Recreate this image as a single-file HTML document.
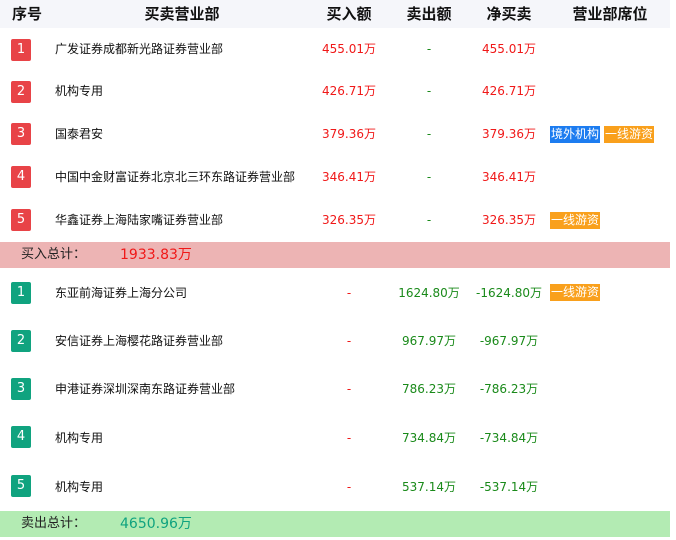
<!DOCTYPE html>
<html><head><meta charset="utf-8"><style>
body{margin:0;width:676px;height:540px;background:#fff;font-family:"DejaVu Sans","Noto Sans CJK SC",sans-serif;position:relative;overflow:hidden}
div{white-space:nowrap}
.a{position:absolute}
.hd{position:absolute;left:0;top:0;width:670px;height:28px;background:#f5f6fa}
.h{position:absolute;top:0;line-height:28px;font-size:15px;font-weight:bold;color:#111;transform:translateX(-50%)}
.b{position:absolute;left:11px;width:20px;height:22px;border-radius:2px;color:#fff;font-size:13px;line-height:22px;text-align:center}
.r{background:#e84347}.g{background:#10a37f}
.n{position:absolute;left:55px;font-size:12px;color:#111;line-height:16px}
.c{position:absolute;font-size:12px;line-height:16px;transform:translateX(-50%)}
.red{color:#f01818}.grn{color:#1a8a1a}
.t{position:absolute;height:17px;line-height:17px;font-size:12px;color:#fff;padding:0 1px}
.tb{background:#1c7cf0}.to{background:#f9a01c}
.bar{position:absolute;left:0;width:670px;height:26px}
</style></head><body>
<div class="hd"></div>
<div class="h" style="left:27px">序号</div>
<div class="h" style="left:182px">买卖营业部</div>
<div class="h" style="left:349px">买入额</div>
<div class="h" style="left:429px">卖出额</div>
<div class="h" style="left:509px">净买卖</div>
<div class="h" style="left:610px">营业部席位</div>

<div class="b r" style="top:39px">1</div><div class="n" style="top:41px">广发证券成都新光路证券营业部</div>
<div class="c red" style="left:349px;top:41px">455.01万</div><div class="c grn" style="left:429px;top:41px">-</div><div class="c red" style="left:509px;top:41px">455.01万</div>

<div class="b r" style="top:81px">2</div><div class="n" style="top:83px">机构专用</div>
<div class="c red" style="left:349px;top:83px">426.71万</div><div class="c grn" style="left:429px;top:83px">-</div><div class="c red" style="left:509px;top:83px">426.71万</div>

<div class="b r" style="top:123px">3</div><div class="n" style="top:126px">国泰君安</div>
<div class="c red" style="left:349px;top:126px">379.36万</div><div class="c grn" style="left:429px;top:126px">-</div><div class="c red" style="left:509px;top:126px">379.36万</div>
<div class="t tb" style="left:550px;top:126px">境外机构</div><div class="t to" style="left:604px;top:126px">一线游资</div>

<div class="b r" style="top:166px">4</div><div class="n" style="top:169px">中国中金财富证券北京北三环东路证券营业部</div>
<div class="c red" style="left:349px;top:169px">346.41万</div><div class="c grn" style="left:429px;top:169px">-</div><div class="c red" style="left:509px;top:169px">346.41万</div>

<div class="b r" style="top:209px">5</div><div class="n" style="top:212px">华鑫证券上海陆家嘴证券营业部</div>
<div class="c red" style="left:349px;top:212px">326.35万</div><div class="c grn" style="left:429px;top:212px">-</div><div class="c red" style="left:509px;top:212px">326.35万</div>
<div class="t to" style="left:550px;top:212px">一线游资</div>

<div class="bar" style="top:242px;background:#edb4b4"></div>
<div class="a" style="left:21px;top:246px;font-size:13px;line-height:18px;color:#222">买入总计：</div>
<div class="a" style="left:120px;top:246px;font-size:14px;line-height:18px;color:#f01818">1933.83万</div>

<div class="b g" style="top:282px">1</div><div class="n" style="top:285px">东亚前海证券上海分公司</div>
<div class="c red" style="left:349px;top:285px">-</div><div class="c grn" style="left:429px;top:285px">1624.80万</div><div class="c grn" style="left:509px;top:285px">-1624.80万</div>
<div class="t to" style="left:550px;top:284px">一线游资</div>

<div class="b g" style="top:330px">2</div><div class="n" style="top:333px">安信证券上海樱花路证券营业部</div>
<div class="c red" style="left:349px;top:333px">-</div><div class="c grn" style="left:429px;top:333px">967.97万</div><div class="c grn" style="left:509px;top:333px">-967.97万</div>

<div class="b g" style="top:378px">3</div><div class="n" style="top:381px">申港证券深圳深南东路证券营业部</div>
<div class="c red" style="left:349px;top:381px">-</div><div class="c grn" style="left:429px;top:381px">786.23万</div><div class="c grn" style="left:509px;top:381px">-786.23万</div>

<div class="b g" style="top:426px">4</div><div class="n" style="top:430px">机构专用</div>
<div class="c red" style="left:349px;top:430px">-</div><div class="c grn" style="left:429px;top:430px">734.84万</div><div class="c grn" style="left:509px;top:430px">-734.84万</div>

<div class="b g" style="top:475px">5</div><div class="n" style="top:479px">机构专用</div>
<div class="c red" style="left:349px;top:479px">-</div><div class="c grn" style="left:429px;top:479px">537.14万</div><div class="c grn" style="left:509px;top:479px">-537.14万</div>

<div class="bar" style="top:511px;background:#b3ebb3"></div>
<div class="a" style="left:21px;top:515px;font-size:13px;line-height:18px;color:#222">卖出总计：</div>
<div class="a" style="left:120px;top:515px;font-size:14px;line-height:18px;color:#10a37f">4650.96万</div>
</body></html>
